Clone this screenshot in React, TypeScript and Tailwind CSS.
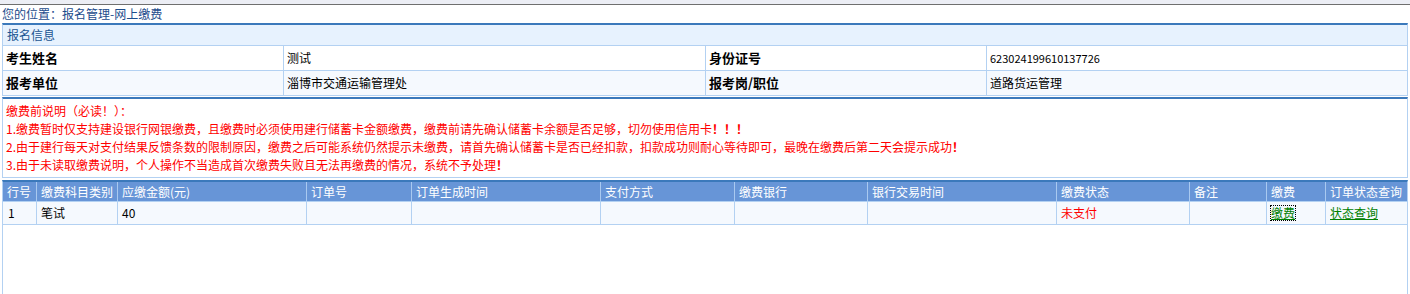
import React from "react";

const font = { fontFamily: '"Noto Sans CJK SC", "Liberation Sans", sans-serif' };

const headers = [
  "行号",
  "缴费科目类别",
  "应缴金额(元)",
  "订单号",
  "订单生成时间",
  "支付方式",
  "缴费银行",
  "银行交易时间",
  "缴费状态",
  "备注",
  "缴费",
  "订单状态查询",
];

export default function App() {
  return (
    <div
      className="w-[1410px] h-[294px] overflow-hidden bg-white text-[12px] text-black"
      style={font}
    >
      <div className="h-[4px] bg-[#eceef5]" />
      <div className="h-px bg-[#6f6f6f]" />
      <div className="h-[18px] pl-[2px] leading-[18px] text-[#1c4c8c]">
        您的位置：报名管理-网上缴费
      </div>

      {/* 报名信息 */}
      <div className="mx-[2px] border-t-2 border-t-[#3b79bb] border-x border-x-[#b3d1f2]">
        <div className="h-[21px] bg-[#e7f2fe] border-b border-b-[#b3d1f2] pl-[4px] leading-[20px] text-[#1b5592]">
          报名信息
        </div>
        <div className="grid grid-cols-[281px_422px_281px_1fr] h-[25px] border-b border-b-[#b3d1f2] bg-white">
          <div className="border-r border-r-[#b3d1f2] pl-[3px] leading-[24px] font-bold text-[13px]">
            考生姓名
          </div>
          <div className="border-r border-r-[#b3d1f2] pl-[3px] leading-[24px]">测试</div>
          <div className="border-r border-r-[#b3d1f2] pl-[3px] leading-[24px] font-bold text-[13px]">
            身份证号
          </div>
          <div className="pl-[3px] leading-[24px] text-[11px]">623024199610137726</div>
        </div>
        <div className="grid grid-cols-[281px_422px_281px_1fr] h-[25px] border-b border-b-[#b3d1f2] bg-[#f5f9fe]">
          <div className="border-r border-r-[#b3d1f2] pl-[3px] leading-[24px] font-bold text-[13px]">
            报考单位
          </div>
          <div className="border-r border-r-[#b3d1f2] pl-[3px] leading-[24px]">淄博市交通运输管理处</div>
          <div className="border-r border-r-[#b3d1f2] pl-[3px] leading-[24px] font-bold text-[13px]">
            报考岗/职位
          </div>
          <div className="pl-[3px] leading-[24px]">道路货运管理</div>
        </div>
      </div>

      {/* 说明 */}
      <div className="mx-[2px] mt-px border-t-2 border-t-[#3b79bb] border-x border-b border-x-[#b3d1f2] border-b-[#b3d1f2] pt-[3px] pb-[3px] pl-[3px] text-[#ff0000] leading-[18px]">
        <div>缴费前说明（必读！）：</div>
        <div>
          1.缴费暂时仅支持建设银行网银缴费，且缴费时必须使用建行储蓄卡金额缴费，缴费前请先确认储蓄卡余额是否足够，切勿使用信用卡<b>！！！</b>
        </div>
        <div>
          2.由于建行每天对支付结果反馈条数的限制原因，缴费之后可能系统仍然提示未缴费，请首先确认储蓄卡是否已经扣款，扣款成功则耐心等待即可，最晚在缴费后第二天会提示成功<b>！</b>
        </div>
        <div>
          3.由于未读取缴费说明，个人操作不当造成首次缴费失败且无法再缴费的情况，系统不予处理<b>！</b>
        </div>
      </div>

      {/* 缴费表 */}
      <div className="mx-[2px] mt-[2px] h-[140px] border-t-2 border-t-[#3b79bb] border-x border-x-[#b3d1f2]">
        <div className="grid grid-cols-[34px_81px_189px_105px_189px_134px_133px_189px_133px_77px_59px_1fr] h-[19px] bg-[#6795d7] text-white">
          {headers.map((h, i) => (
            <div
              key={h}
              className={
                "pl-[4px] leading-[19px] whitespace-nowrap overflow-hidden " +
                (i < headers.length - 1 ? "border-r border-r-[#a9c9f0]" : "")
              }
            >
              {h}
            </div>
          ))}
        </div>
        <div className="grid grid-cols-[34px_81px_189px_105px_189px_134px_133px_189px_133px_77px_59px_1fr] h-[24px] bg-[#f5f9fe] border-y border-y-[#b3d1f2]">
          <div className="border-r border-r-[#b3d1f2] pl-[5px] leading-[22px]">1</div>
          <div className="border-r border-r-[#b3d1f2] pl-[4px] leading-[22px]">笔试</div>
          <div className="border-r border-r-[#b3d1f2] pl-[4px] leading-[22px]">40</div>
          <div className="border-r border-r-[#b3d1f2]" />
          <div className="border-r border-r-[#b3d1f2]" />
          <div className="border-r border-r-[#b3d1f2]" />
          <div className="border-r border-r-[#b3d1f2]" />
          <div className="border-r border-r-[#b3d1f2]" />
          <div className="border-r border-r-[#b3d1f2] pl-[4px] leading-[22px] text-[#ff0000]">未支付</div>
          <div className="border-r border-r-[#b3d1f2]" />
          <div className="border-r border-r-[#b3d1f2] pl-[4px] leading-[22px]">
            <a
              href="#"
              className="text-[#008000] underline outline-1 outline-dotted outline-black leading-[14px] inline-block"
            >
              缴费
            </a>
          </div>
          <div className="pl-[4px] leading-[22px]">
            <a href="#" className="text-[#008000] underline">
              状态查询
            </a>
          </div>
        </div>
      </div>
    </div>
  );
}
